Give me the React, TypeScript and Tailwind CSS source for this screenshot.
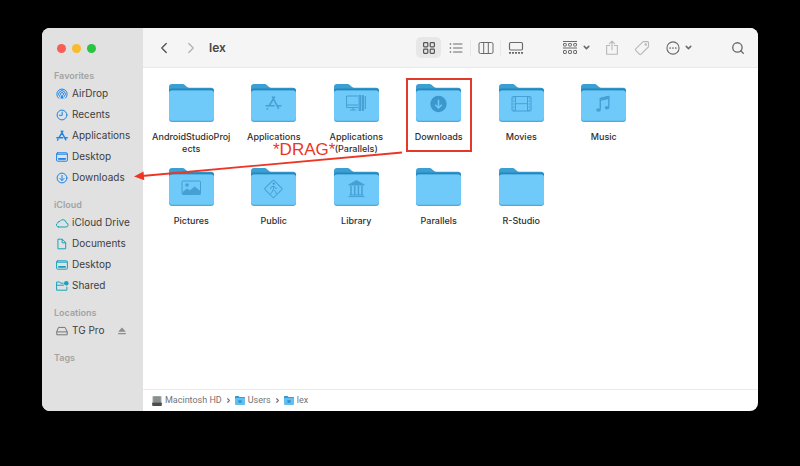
import React from 'react'
import { ChevronDown, ChevronLeft, ChevronRight, Search } from 'lucide-react'

type LineProps = {
  children: React.ReactNode
  className?: string
}

// 14x14 line icon used by the sidebar and the toolbar
const Line = ({ children, className = 'size-[14px]' }: LineProps) => (
  <svg
    viewBox="0 0 14 14"
    className={className}
    fill="none"
    stroke="currentColor"
    strokeWidth="1"
    strokeLinecap="round"
    strokeLinejoin="round"
    aria-hidden="true"
  >
    {children}
  </svg>
)

const DesktopGlyph = (
  <>
    <rect x="1.6" y="2.8" width="10.8" height="8.4" rx="1" />
    <path d="M1.8 4.2h10.4" />
    <rect x="3.2" y="8" width="7.6" height="1.8" fill="currentColor" stroke="none" />
  </>
)

const sections = [
  {
    title: 'Favorites',
    color: 'text-[#1a84e8]',
    items: [
      {
        label: 'AirDrop',
        icon: (
          <>
            <path d="M3.6 11.2a5.2 5.2 0 1 1 6.8 0" />
            <path d="M4.7 9.6a3.4 3.4 0 1 1 4.6 0" />
            <path d="M5.9 8.3a1.6 1.6 0 1 1 2.2 0" />
            <path d="M7 7.6 5.2 11.6h3.6z" fill="currentColor" stroke="none" />
          </>
        ),
      },
      {
        label: 'Recents',
        icon: (
          <>
            <circle cx="7" cy="7" r="4.9" />
            <path d="M7.2 4v3.3H4.4" />
          </>
        ),
      },
      {
        label: 'Applications',
        icon: (
          <path
            d="m7.9 2.2-3.9 6.5M6.2 2.2l4.6 8.6M1.8 8.7h5.9M10 8.7h2.2M3 10.4l-.4.8"
            strokeWidth="1.4"
          />
        ),
      },
      { label: 'Desktop', icon: DesktopGlyph },
      {
        label: 'Downloads',
        icon: (
          <>
            <circle cx="7" cy="7" r="4.9" />
            <path d="M7 4.4v5M4.9 7.4 7 9.5l2.1-2.1" />
          </>
        ),
      },
    ],
  },
  {
    title: 'iCloud',
    color: 'text-[#17a3bd]',
    items: [
      {
        label: 'iCloud Drive',
        icon: (
          <path d="M3.6 11h7.2a2.1 2.1 0 0 0 .4-4.2 3.3 3.3 0 0 0-6.2-1.4A2 2 0 0 0 2.7 7a2.1 2.1 0 0 0 .9 4z" />
        ),
      },
      {
        label: 'Documents',
        icon: (
          <>
            <path d="M3.3 2.2h4l3.4 3.4v6.2H3.3z" />
            <path d="M7.2 2.3v3.5h3.4" />
          </>
        ),
      },
      { label: 'Desktop', icon: DesktopGlyph },
      {
        label: 'Shared',
        icon: (
          <>
            <path d="M8.2 4.2H5.6L4.8 3H1.6v8.2h10.3V8M1.6 6.2h7" />
            <circle cx="11.3" cy="4.2" r="2.3" fill="currentColor" stroke="none" />
          </>
        ),
      },
    ],
  },
  {
    title: 'Locations',
    color: 'text-[#757575]',
    items: [
      {
        label: 'TG Pro',
        eject: true,
        icon: (
          <>
            <path d="M3.9 3.4h6.2l2.1 4.4v3H1.8v-3z" />
            <path d="M1.9 7.9h10.2" />
          </>
        ),
      },
    ],
  },
  { title: 'Tags', color: '', items: [] },
]

const folders = [
  { label: 'AndroidStudioProj\nects' },
  {
    label: 'Applications',
    glyph: (
      <path
        d="m23.7 12.5-5.6 9.3M21.2 12.5l6.5 12.3M14.5 21.8h9M26.5 21.8h4M16.8 24.2l-.8 1.4"
        strokeWidth="1.6"
      />
    ),
  },
  {
    label: 'Applications\n(Parallels)',
    glyph: (
      <>
        <path d="M24 12H12.5v11.5H24M12.5 21H24M16 26h6M19 23.5V26" />
        <path d="M25.2 11.5h1.4v15h-1.4zM28.5 11.5h.8v15h-.8zM31.3 12v13" strokeWidth="1.2" />
      </>
    ),
  },
  {
    label: 'Downloads',
    boxed: true,
    glyph: (
      <>
        <circle cx="22.5" cy="20" r="8.2" fill="#3c98cc" stroke="none" />
        <path d="M22.5 15.8v8M19.2 20.7l3.3 3.3 3.3-3.3" stroke="#6fc8f8" strokeWidth="1.5" />
      </>
    ),
  },
  {
    label: 'Movies',
    glyph: (
      <>
        <rect x="13" y="12.5" width="19" height="14.5" rx="1" />
        <path d="M16.5 12.5V27M28.5 12.5V27M16.5 19.7h12" />
        <path d="M14.8 13.5V27M30.3 13.5V27" strokeWidth="1.6" strokeDasharray="1 2" />
      </>
    ),
  },
  {
    label: 'Music',
    glyph: (
      <>
        <path d="M19.3 25.5V14.8l8.5-2v10.5" strokeWidth="1.4" />
        <path d="m19.3 14.2 8.5-2v2.2l-8.5 2z" fill="#45a0d4" />
        <ellipse cx="17.5" cy="26" rx="2.3" ry="1.8" fill="#45a0d4" stroke="none" />
        <ellipse cx="26" cy="23.8" rx="2.3" ry="1.8" fill="#45a0d4" stroke="none" />
      </>
    ),
  },
  {
    label: 'Pictures',
    glyph: (
      <>
        <rect x="13" y="13" width="18.5" height="13.5" rx="1" />
        <circle cx="18" cy="17" r="1.8" fill="#45a0d4" stroke="none" />
        <path d="m13.5 24 4.5-3.5 3 2 4.5-4 6 4.5v3.5h-18z" fill="#45a0d4" stroke="none" />
      </>
    ),
  },
  {
    label: 'Public',
    glyph: (
      <>
        <rect x="16" y="14.5" width="12.8" height="12.8" rx="1" transform="rotate(45 22.4 20.9)" />
        <circle cx="22.8" cy="15.6" r="1.2" fill="#45a0d4" stroke="none" />
        <path d="M22.5 18v3.5l2.3 2.2.4 2.3M22.3 21.5l-1.3 2.7-1.5 1.8M22.5 18l-2.5 1.2-.6 2M22.8 18l1.4 1.8 2 .8" />
      </>
    ),
  },
  {
    label: 'Library',
    glyph: (
      <>
        <path d="m14.5 16.5 8-4.5 8 4.5v1h-16z" fill="#45a0d4" stroke="none" />
        <path d="M17 18v9M20.7 18v9M24.4 18v9M28 18v9" strokeWidth="1.5" />
        <path d="M15.5 27h14M14.5 28.6h16" />
      </>
    ),
  },
  { label: 'Parallels' },
  { label: 'R-Studio' },
]

const crumbs = ['Macintosh HD', 'Users', 'lex']

const Folder = ({ children }: { children?: React.ReactNode }) => (
  <svg viewBox="0 0 45 38" className="h-[38px] w-[45px]" aria-hidden="true">
    <path
      d="M0 3q0-3 3-3h9.8c1.7 0 2.3.4 3.5 1.4l1.5 1.3c1 .8 1.7 1 3 1H42q3 0 3 3V12H0z"
      fill="#3a9fd3"
    />
    <path d="M0 7q0-2.5 2.5-2.5h40Q45 4.5 45 7v5H0z" fill="#2488bd" />
    <rect y="6.5" width="45" height="31.5" rx="3" fill="#4fa9d9" />
    <rect y="6.5" width="45" height="30.3" rx="3" fill="#6fc9f9" />
    <g fill="none" stroke="#45a0d4" strokeWidth="1" strokeLinejoin="round">
      {children}
    </g>
  </svg>
)

const MiniFolder = () => (
  <svg viewBox="0 0 10 9" className="h-[9px] w-[10px]" aria-hidden="true">
    <path d="M0 .8Q0 0 .8 0h2.7l1 .9h4.7q.8 0 .8.8V4H0z" fill="#2d93c9" />
    <rect y="1.8" width="10" height="7.2" rx=".8" fill="#62bff0" />
    <path d="M3.4 4.2h3.2v2.6H3.4z" fill="#3490c8" />
  </svg>
)

const Drive = () => (
  <svg viewBox="0 0 10 10" className="size-[10px]" aria-hidden="true">
    <rect x=".5" width="9" height="8" rx="1" fill="#a3a6a4" />
    <rect x="1.5" y=".8" width="7" height="5.5" rx=".6" fill="#87908b" />
    <rect x=".2" y="6.5" width="9.6" height="3.5" rx=".8" fill="#4c4c4c" />
  </svg>
)

const Sidebar = () => (
  <aside className="flex w-[101px] shrink-0 flex-col bg-[#e1e1e1]">
    <div className="flex h-10 shrink-0 items-center gap-[6px] pl-[15px]">
      <button aria-label="Close" className="size-[9px] rounded-full bg-[#fb5c55]" />
      <button aria-label="Minimize" className="size-[9px] rounded-full bg-[#f9bb2d]" />
      <button aria-label="Zoom" className="size-[9px] rounded-full bg-[#29c440]" />
    </div>
    <nav className="flex flex-col gap-[10px] pt-px">
      {sections.map((section) => (
        <section key={section.title}>
          <h2 className="pl-3 text-[9px] leading-[14px] font-semibold text-[#a3a3a3]">
            {section.title}
          </h2>
          {section.items.map((item) => (
            <div key={item.label} className="flex h-[21px] items-center pr-[17px] pl-[13px]">
              <a href="#" className="flex items-center gap-[3px] text-[10px] whitespace-nowrap text-[#3d3d3d]">
                <span className={section.color}>
                  <Line>{item.icon}</Line>
                </span>
                {item.label}
              </a>
              {'eject' in item && (
                <button aria-label="Eject" className="ml-auto text-[#8c8c8c]">
                  <svg viewBox="0 0 8 8" className="size-2" fill="currentColor">
                    <path d="m4 .6 3.8 4.2H.2zM.2 6h7.6v1.2H.2z" />
                  </svg>
                </button>
              )}
            </div>
          ))}
        </section>
      ))}
    </nav>
  </aside>
)

const Toolbar = () => (
  <header className="flex h-10 shrink-0 items-center border-b border-[#e9e9e9] bg-[#f5f5f5] pr-[7px] pl-3 text-[#6a6a6a]">
    <button aria-label="Back" className="flex w-[18px] justify-center text-[#555]">
      <ChevronLeft size={18} strokeWidth={1.8} />
    </button>
    <button aria-label="Forward" className="ml-[9px] flex w-[18px] justify-center text-[#b4b4b4]">
      <ChevronRight size={18} strokeWidth={1.8} />
    </button>
    <h1 className="ml-[9px] text-[12px] font-semibold text-[#474747]">lex</h1>

    <div className="ml-auto flex items-center gap-[2px]">
      <button
        aria-label="Icons"
        className="flex h-[21px] w-[25px] items-center justify-center rounded-[5px] bg-[#e7e7e7] text-[#555]"
      >
        <Line>
          <g strokeWidth="1.2">
            <rect x="1.6" y="1.6" width="4.2" height="4.2" rx=".8" />
            <rect x="8.2" y="1.6" width="4.2" height="4.2" rx=".8" />
            <rect x="1.6" y="8.2" width="4.2" height="4.2" rx=".8" />
            <rect x="8.2" y="8.2" width="4.2" height="4.2" rx=".8" />
          </g>
        </Line>
      </button>
      <button aria-label="List" className="flex w-[25px] justify-center">
        <Line>
          <path d="M4.5 3H13M4.5 7H13M4.5 11H13" />
          <path d="M1.3 3h.3M1.3 7h.3M1.3 11h.3" strokeWidth="1.4" />
        </Line>
      </button>
      <span className="h-4 w-px bg-[#e8e8e8]" />
      <button aria-label="Columns" className="flex w-[25px] justify-center">
        <svg viewBox="0 0 16 14" className="h-[14px] w-4" fill="none" stroke="currentColor">
          <rect x="1" y="1.5" width="14" height="11" rx="1.5" />
          <path d="M5.7 1.5v11M10.3 1.5v11" />
        </svg>
      </button>
      <span className="h-4 w-px bg-[#e8e8e8]" />
      <button aria-label="Gallery" className="flex w-[25px] justify-center">
        <svg viewBox="0 0 16 14" className="h-[14px] w-4" fill="none" stroke="currentColor">
          <rect x="1.5" y="1.5" width="13" height="7.5" rx="1.2" strokeWidth="1.2" />
          <path d="M1 11.8h14" strokeWidth="1.8" strokeDasharray="2 1" />
        </svg>
      </button>
    </div>

    <button aria-label="Group" className="ml-[34px] flex items-center gap-1">
      <svg viewBox="0 0 16 14" className="h-[14px] w-4" fill="none" stroke="currentColor">
        <path d="M1 .5h14M1 7h14" />
        <rect x="1.5" y="2.5" width="2.8" height="2.5" rx=".5" />
        <rect x="6.6" y="2.5" width="2.8" height="2.5" rx=".5" />
        <rect x="11.7" y="2.5" width="2.8" height="2.5" rx=".5" />
        <rect x="1.5" y="9.5" width="2.8" height="3" rx=".5" />
        <rect x="6.6" y="9.5" width="2.8" height="3" rx=".5" />
        <rect x="11.7" y="9.5" width="2.8" height="3" rx=".5" />
      </svg>
      <ChevronDown size={9} strokeWidth={4} />
    </button>
    <button aria-label="Share" className="ml-3 flex w-[18px] justify-center text-[#b9b9b9]">
      <Line className="size-4">
        <path d="M5 4.8H2.3v7.7h9.4V4.8H9M7 8.5V1M4.8 3.2 7 1l2.2 2.2" />
      </Line>
    </button>
    <button aria-label="Tags" className="ml-3 flex w-[18px] justify-center text-[#b9b9b9]">
      <Line className="size-4">
        <path d="M8 1.4h3.7q1 0 1 1v3.5l-6.5 6.5q-.7.7-1.4 0L1.5 9.1q-.7-.7 0-1.4z" />
        <circle cx="10.3" cy="3.9" r=".6" />
      </Line>
    </button>
    <button aria-label="Actions" className="ml-[14px] flex items-center gap-[3px]">
      <Line className="size-4">
        <circle cx="7" cy="7" r="5.3" />
        <path d="M4.5 7h.01M7 7h.01M9.5 7h.01" strokeWidth="1.5" />
      </Line>
      <ChevronDown size={9} strokeWidth={4} />
    </button>
    <button aria-label="Search" className="ml-8 flex w-[26px] justify-center">
      <Search size={14} strokeWidth={2.3} />
    </button>
  </header>
)

const PathBar = () => (
  <footer className="flex h-[22px] shrink-0 items-center gap-[3px] border-t border-[#ececec] pl-[9px] font-['Roboto','Liberation_Sans',sans-serif] text-[9px] text-[#737373]">
    {crumbs.map((crumb, index) => (
      <React.Fragment key={crumb}>
        {index > 0 && <ChevronRight size={7} strokeWidth={4} />}
        <a href="#" className="flex items-center gap-[3px]">
          {index === 0 ? <Drive /> : <MiniFolder />}
          {crumb}
        </a>
      </React.Fragment>
    ))}
  </footer>
)

const App = () => {
  return (
    <div className="flex min-h-screen flex-col bg-black px-[42px] pt-7 pb-[55px] font-['Inter','Liberation_Sans',sans-serif]">
      <div className="relative flex flex-1 overflow-hidden rounded-[8px] bg-white">
        <Sidebar />
        <div className="flex min-w-0 flex-1 flex-col">
          <Toolbar />
          <main className="flex-1 pt-4 pl-[7px]">
            <div className="grid max-w-[495px] grid-cols-6">
              {folders.map((folder) => (
                <a
                  key={folder.label}
                  href="#"
                  className="relative flex h-[84px] flex-col items-center gap-[9px] text-center text-[9px] leading-[12px] font-medium whitespace-pre text-[#2f2f2f]"
                >
                  <Folder>{folder.glyph}</Folder>
                  {folder.label}
                  {folder.boxed && (
                    <span className="absolute inset-x-0 -top-[6px] mx-auto h-[74px] w-[66px] border-2 border-[#e3392b]" />
                  )}
                </a>
              ))}
            </div>
          </main>
          <PathBar />
        </div>

        {/* Drag annotation */}
        <div className="pointer-events-none absolute top-[112px] left-[92px] text-[#ee3524]">
          <svg viewBox="0 0 270 44" className="h-[44px] w-[270px]" aria-hidden="true">
            <path d="M8 36 268 12.5" stroke="currentColor" strokeWidth="1.8" />
            <path d="m0 36.5 9.5-5 .8 8.8z" fill="currentColor" />
          </svg>
          <span className="absolute top-0 left-[139px] font-['Liberation_Sans',sans-serif] text-[17px] leading-5">
            *DRAG*
          </span>
        </div>
      </div>
    </div>
  )
}

export default App
